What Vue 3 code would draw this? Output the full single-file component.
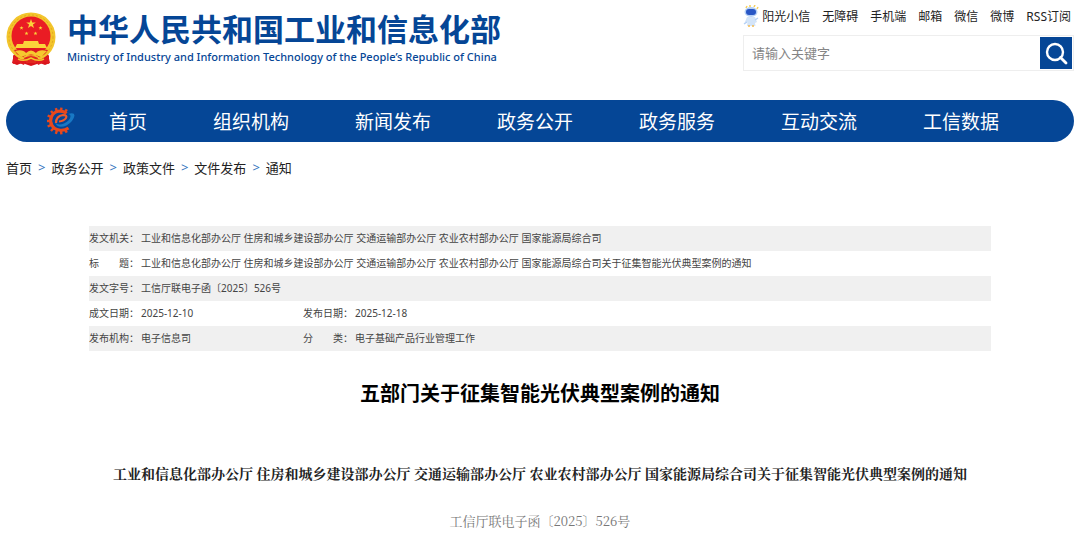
<script setup>
import { ref } from 'vue'

const keyword = ref('')
const tools = ['阳光小信', '无障碍', '手机端', '邮箱', '微信', '微博', 'RSS订阅']
const nav = ['首页', '组织机构', '新闻发布', '政务公开', '政务服务', '互动交流', '工信数据']
const crumbs = ['首页', '政务公开', '政策文件', '文件发布', '通知']
const issuers = '工业和信息化部办公厅 住房和城乡建设部办公厅 交通运输部办公厅 农业农村部办公厅 国家能源局综合司'
const subject = issuers + '关于征集智能光伏典型案例的通知'
const rows = [
  [['发文机关：', issuers]],
  [['标　　题：', subject]],
  [['发文字号：', '工信厅联电子函〔2025〕526号']],
  [['成文日期：', '2025-12-10'], ['发布日期：', '2025-12-18']],
  [['发布机构：', '电子信息司'], ['分　　类：', '电子基础产品行业管理工作']],
]
const teeth = Array.from({ length: 11 }, (_, i) => 30 - i * 24)
const star = 'M0-5 1.2-1.6 4.8-1.6 1.9.6 3 4 0 1.9-3 4-1.9.6-4.8-1.6-1.2-1.6z'
</script>

<template>
  <div class="page">
    <header class="top">
      <a href="#" class="brand">
        <svg class="emblem" viewBox="0 0 50 54" aria-hidden="true">
          <path d="M8 42 6 51 11 53 16 51 25 54 34 51 39 53 44 51 42 42z" fill="#d8141c" />
          <circle cx="25" cy="25" r="24.5" fill="#f3c52c" />
          <circle cx="25" cy="25" r="22" fill="none" stroke="#e2a81f" stroke-width="1" stroke-dasharray="2 2" />
          <circle cx="25" cy="24" r="19.5" fill="#ea1c24" />
          <g fill="#fbd43a">
            <path :d="star" transform="translate(25 12)" />
            <path :d="star" transform="translate(15.5 16) scale(.42)" />
            <path :d="star" transform="translate(34.5 16) scale(.42)" />
            <path :d="star" transform="translate(20.5 21.5) scale(.42)" />
            <path :d="star" transform="translate(29.5 21.5) scale(.42)" />
            <path d="M18 29h14l1 3h6l2 4H9l2-4h6z" />
          </g>
          <path d="M8 38Q25 34 42 38L39 42 33 45Q25 38 17 45L11 42z" fill="#dd1820" />
          <path d="M9 39Q17 37 20 41Q25 36 30 41Q33 37 41 39L35 45Q25 40 15 45z" fill="#f6c92f" />
          <path d="M7 43Q16 51 21 45L18 53 11 50 7 52zM43 43Q34 51 29 45L32 53 39 50 43 52z" fill="#df1b20" />
          <path d="M18 46Q25 42 32 46L30 51H20z" fill="#e2281f" />
          <path d="M12 47Q18 50 25 46Q32 50 38 47" fill="none" stroke="#f3c52c" stroke-width="1.5" />
        </svg>
        <span class="names">
          <span class="cn">中华人民共和国工业和信息化部</span>
          <span class="en">Ministry of Industry and Information Technology of the People’s Republic of China</span>
        </span>
      </a>
      <div class="side">
        <div class="tools">
          <svg class="mascot" viewBox="0 0 16 22" aria-hidden="true">
            <path d="M3 3 4 1M7 2V0M11 2l1-2M14 4l1-2" stroke="#f5cf59" stroke-width="1.5" />
            <ellipse cx="8" cy="7" rx="6.5" ry="5" fill="#b5d0f5" />
            <rect x="3" y="4" width="10" height="6" rx="3" fill="#2856c5" />
            <path d="M4 12h8l2 5-2 1 .5 3H4l.5-4-3 1z" fill="#d3e4f8" />
            <path d="M4 17 1 19M12 15l3-2" stroke="#b5d0f5" stroke-width="1.5" />
            <path d="M5 21h2M9 21h2" stroke="#f3b94c" stroke-width="1.5" />
          </svg>
          <a v-for="t in tools" :key="t" href="#">{{ t }}</a>
        </div>
        <form class="search" @submit.prevent>
          <input v-model="keyword" type="text" aria-label="请输入关键字" placeholder="请输入关键字" />
          <button type="submit" aria-label="搜索">
            <svg viewBox="0 0 32 32" aria-hidden="true">
              <circle cx="15" cy="15" r="8" fill="none" stroke="#fff" stroke-width="2.4" />
              <path d="M20.5 20.5 26 26" stroke="#fff" stroke-width="2.8" stroke-linecap="round" />
            </svg>
          </button>
        </form>
      </div>
    </header>

    <nav class="nav">
      <svg class="gear" viewBox="0 0 28 28" aria-hidden="true">
        <rect v-for="a in teeth" :key="a" x="11.8" y="0.5" width="2.4" height="4" fill="#e8481c" :transform="`rotate(${a} 13 14)`" />
        <path d="M21.500 21Q17 24 12 23A9.500 9.500 0 1 1 19.500 6.500" fill="none" stroke="#e8481c" stroke-width="3.2" />
        <path d="M9 16Q9 9 16 8Q20.500 8 19 11Q17 14 12 14.500" fill="none" stroke="#f0592a" stroke-width="2.2" />
        <path d="M8 15.500Q11 19 17 16.500Q23 13.500 23.500 9.500Q23.500 7 21 7Q27.500 5 27.500 8.500Q26.500 14.500 19.500 18.500Q10.500 22 8 15.500z" fill="#1878c4" />
      </svg>
      <a v-for="n in nav" :key="n" href="#">{{ n }}</a>
    </nav>

    <nav class="crumbs" aria-label="当前位置">
      <template v-for="(c, i) in crumbs" :key="c">
        <span v-if="i" class="sep">&gt;</span>
        <a href="#">{{ c }}</a>
      </template>
    </nav>

    <main>
      <table class="meta">
        <colgroup><col class="label" /><col class="short" /><col class="label" /><col /></colgroup>
        <tbody>
          <tr v-for="(r, i) in rows" :key="i">
            <template v-for="c in r" :key="c[0]">
              <th scope="row">{{ c[0] }}</th>
              <td :colspan="r.length === 1 ? 3 : 1">{{ c[1] }}</td>
            </template>
          </tr>
        </tbody>
      </table>
      <h1>五部门关于征集智能光伏典型案例的通知</h1>
      <h2>{{ subject }}</h2>
      <p class="number">工信厅联电子函〔2025〕526号</p>
    </main>
  </div>
</template>

<style>
body {
  margin: 0;
  background: #fff;
}
</style>

<style scoped>
.page {
  padding: 0 6px;
  font-family: "Noto Sans", "Noto Sans CJK SC", sans-serif;
  color: #222;
}
a {
  color: inherit;
  text-decoration: none;
  white-space: nowrap;
}
.top {
  display: flex;
  justify-content: space-between;
  height: 100px;
}
.brand {
  display: flex;
  align-items: flex-start;
  gap: 11px;
  padding-top: 12px;
  color: #054696;
}
.emblem {
  width: 50px;
  height: 54px;
}
.names {
  display: flex;
  flex-direction: column;
}
.cn {
  font-family: "Liberation Sans", "Noto Sans CJK SC", sans-serif;
  font-size: 31px;
  font-weight: 700;
  line-height: 38px;
}
.en {
  font-family: "Noto Sans", sans-serif;
  font-size: 11px;
  font-weight: 500;
  line-height: 14px;
}
.side {
  width: 331px;
}
.tools {
  display: flex;
  align-items: center;
  justify-content: flex-end;
  gap: 12px;
  height: 22px;
  padding: 5px 3px 0 0;
  font-size: 12px;
}
.mascot {
  width: 16px;
  height: 22px;
  margin-right: -9px;
}
.search {
  display: flex;
  margin-top: 8px;
  padding: 1px;
  border: 1px solid #eee;
}
.search input {
  flex: 1;
  min-width: 0;
  padding: 0 7px;
  border: 0;
  outline: 0;
  font: 13px "Noto Sans", "Noto Sans CJK SC", sans-serif;
}
.search input::placeholder {
  color: #858585;
}
.search button {
  width: 32px;
  height: 32px;
  padding: 0;
  border: 0;
  background: #054696;
}
.search svg {
  display: block;
}
.nav {
  display: flex;
  align-items: center;
  gap: 66px;
  height: 42px;
  padding-left: 41px;
  border-radius: 21px;
  background: #054696;
  color: #fff;
  font-size: 19px;
}
.gear {
  width: 28px;
  height: 28px;
  flex: none;
  margin-right: -32px;
}
.crumbs {
  display: flex;
  align-items: center;
  gap: 6px;
  height: 50px;
  font-size: 13px;
}
.sep {
  color: #3274bd;
}
main {
  padding: 34px 83px 0;
}
.meta {
  width: 100%;
  table-layout: fixed;
  border-collapse: collapse;
  font-size: 10px;
  line-height: 25px;
  color: #444;
}
.meta tr:nth-child(odd) {
  background: #f0f0f0;
}
.meta th,
.meta td {
  padding: 0;
  font-weight: 400;
  text-align: left;
  white-space: nowrap;
}
.label {
  width: 52px;
}
.short {
  width: 162px;
}
h1 {
  margin: 28px 0 0;
  font-size: 20px;
  line-height: 30px;
  text-align: center;
  color: #000;
}
h2 {
  margin: 54px 0 0;
  font-family: "Noto Serif CJK SC", "Liberation Serif", "Noto Sans CJK SC", serif;
  font-size: 14px;
  line-height: 20px;
  text-align: center;
}
.number {
  margin: 28px 0 0;
  font-family: "Noto Serif CJK SC", "Liberation Serif", "Noto Sans CJK SC", serif;
  font-size: 13px;
  line-height: 20px;
  text-align: center;
  color: #777;
}
</style>
